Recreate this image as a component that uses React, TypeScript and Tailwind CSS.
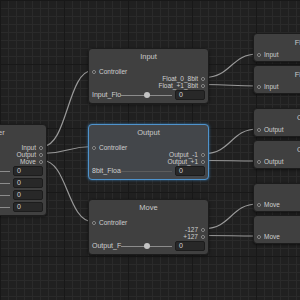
import React from "react";

type Slider = { label: string; knob?: boolean; dim?: boolean };

interface NodeProps {
  pos: string;
  title: string;
  selected?: boolean;
  inputs?: string[];
  outputs?: string[];
  sliders?: Slider[];
}

function Port() {
  return <span className="block w-[4px] h-[4px] shrink-0 rounded-full border border-[#8e8e8e] bg-[#2a2a2a]" />;
}

function SliderRow({ s }: { s: Slider }) {
  return (
    <div className="flex items-center h-[12px] px-[3px]">
      <span className="text-[7px] text-[#cfcfcf] whitespace-nowrap">{s.label}</span>
      <div className={`relative flex-1 h-px mr-[3px] ${s.dim ? "bg-[#5c5c5c]" : "bg-[#8c8c8c]"}`}>
        {s.knob && (
          <span className="absolute left-1/2 top-1/2 w-[6px] h-[6px] -translate-x-1/2 -translate-y-1/2 rounded-full bg-[#c4c4c4]" />
        )}
      </div>
      <div className="w-[30px] h-[10px] shrink-0 rounded-[2px] bg-[#282828] border border-[#1c1c1c] flex items-center pl-[3px] text-[7px] text-[#d4d4d4]">
        0
      </div>
    </div>
  );
}

function Node({ pos, title, selected, inputs = [], outputs = [], sliders = [] }: NodeProps) {
  return (
    <div
      className={`absolute ${pos} rounded-[4px] flex flex-col pb-[2px] ${
        selected
          ? "bg-[#43464a] border border-[#4f93cc] shadow-[0_0_3px_#3a78aa]"
          : "bg-[#404040] border border-[#1c1c1c] shadow-[0_1px_3px_rgba(0,0,0,0.5)]"
      }`}
    >
      <div className="h-[16px] flex items-center justify-center text-[7.5px] text-[#c8c8c8] whitespace-nowrap">
        {title}
      </div>
      <div className="pt-[3px] flex flex-col">
        {inputs.map((i) => (
          <div key={i} className="flex items-center gap-[3px] h-[7px] pl-[3px]">
            <Port />
            <span className="text-[6.5px] text-[#cfcfcf]">{i}</span>
          </div>
        ))}
        {outputs.map((o) => (
          <div key={o} className="flex items-center justify-end gap-[3px] h-[7px] pr-[3px]">
            <span className="text-[6.5px] text-[#cfcfcf]">{o}</span>
            <Port />
          </div>
        ))}
      </div>
      {sliders.map((s, i) => (
        <SliderRow key={i} s={s} />
      ))}
    </div>
  );
}

function TargetNode({ pos, title, port }: { pos: string; title: string; port: string }) {
  return (
    <div className={`absolute ${pos} w-[121px] rounded-[4px] bg-[#404040] border border-[#1c1c1c] shadow-[0_1px_3px_rgba(0,0,0,0.5)] flex flex-col pb-[2px]`}>
      <div className="h-[17px] flex items-center justify-center text-[7.5px] text-[#c8c8c8] whitespace-nowrap">{title}</div>
      <div className="flex items-center gap-[3px] h-[8px] pl-[3px]">
        <Port />
        <span className="text-[6.5px] text-[#cfcfcf]">{port}</span>
      </div>
    </div>
  );
}

const edges: [number, number, number, number][] = [
  [42.5, 146.5, 92.5, 70.5],
  [42.5, 153.5, 92.5, 146.5],
  [42.5, 160.5, 92.5, 221.5],
  [204.5, 77.5, 257.5, 54],
  [204.5, 84.5, 257.5, 86],
  [204.5, 153.5, 257.5, 129],
  [204.5, 160.5, 257.5, 161],
  [204.5, 228.5, 257.5, 204],
  [204.5, 235.5, 257.5, 236],
];

export default function App() {
  return (
    <div className="relative w-[300px] h-[300px] overflow-hidden bg-[#202020] font-['Liberation_Sans',Arial,sans-serif] [background-image:linear-gradient(to_right,#181818_1px,transparent_1px),linear-gradient(to_bottom,#181818_1px,transparent_1px),linear-gradient(to_right,#2a2a2a_1px,transparent_1px),linear-gradient(to_bottom,#2a2a2a_1px,transparent_1px)] [background-size:64px_64px,64px_64px,8px_8px,8px_8px]">
      {/* edges */}
      <svg className="absolute inset-0" width="300" height="300">
        {edges.map(([x1, y1, x2, y2], i) => {
          const d = (x2 - x1) / 2;
          return (
            <path
              key={i}
              d={`M${x1} ${y1} C${x1 + d} ${y1} ${x2 - d} ${y2} ${x2} ${y2}`}
              fill="none"
              stroke="#999999"
              strokeWidth="1.2"
            />
          );
        })}
      </svg>

      <Node
        pos="left-[-70px] top-[124px] w-[117px]"
        title="Controller"
        outputs={["Input", "Output", "Move"]}
        sliders={[{ label: "" }, { label: "" }, { label: "" }, { label: "" }]}
      />

      <Node
        pos="left-[88px] top-[48px] w-[121px]"
        title="Input"
        inputs={["Controller"]}
        outputs={["Float_0_8bit", "Float_+1_8bit"]}
        sliders={[{ label: "Input_Flo", knob: true }]}
      />
      <Node
        pos="left-[88px] top-[124px] w-[121px]"
        title="Output"
        selected
        inputs={["Controller"]}
        outputs={["Output_-1", "Output_+1"]}
        sliders={[{ label: "8bit_Floa", dim: true }]}
      />
      <Node
        pos="left-[88px] top-[199px] w-[121px]"
        title="Move"
        inputs={["Controller"]}
        outputs={["-127", "+127"]}
        sliders={[{ label: "Output_F", knob: true }]}
      />

      <TargetNode pos="left-[253px] top-[33px]" title="Float_Input" port="Input" />
      <TargetNode pos="left-[253px] top-[65px]" title="Float_Input" port="Input" />
      <TargetNode pos="left-[253px] top-[108px]" title="Output_In" port="Output" />
      <TargetNode pos="left-[253px] top-[140px]" title="Output_In" port="Output" />
      <TargetNode pos="left-[253px] top-[183px]" title="Move" port="Move" />
      <TargetNode pos="left-[253px] top-[215px]" title="Move" port="Move" />
    </div>
  );
}
